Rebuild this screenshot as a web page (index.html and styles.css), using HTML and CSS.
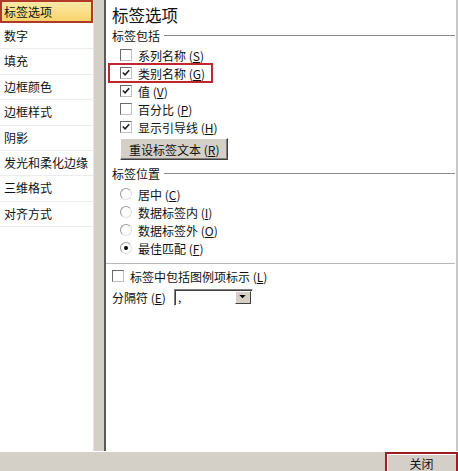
FILE: index.html
```html
<!DOCTYPE html>
<html>
<head>
<meta charset="utf-8">
<link rel="stylesheet" href="styles.css">
</head>
<body>
<div class="dialog">
  <div class="main">
    <ul class="nav">
      <li class="nav-item selected">标签选项</li>
      <li class="nav-item">数字</li>
      <li class="nav-item">填充</li>
      <li class="nav-item">边框颜色</li>
      <li class="nav-item">边框样式</li>
      <li class="nav-item">阴影</li>
      <li class="nav-item">发光和柔化边缘</li>
      <li class="nav-item">三维格式</li>
      <li class="nav-item">对齐方式</li>
    </ul>
    <div class="gutter"></div>
    <div class="content">
      <div class="title">标签选项</div>
      <div class="group-head"><span>标签包括</span><span class="rule"></span></div>
      <div class="opts">
        <div class="row"><span class="cb"></span><span>系列名称 (<u>S</u>)</span></div>
        <div class="row hl"><span class="cb on"><svg viewBox="0 0 11 11"><path d="M2 5 L4.5 7.5 L9 2.5" fill="none" stroke="#222" stroke-width="1.8"/></svg></span><span>类别名称 (<u>G</u>)</span></div>
        <div class="row"><span class="cb on"><svg viewBox="0 0 11 11"><path d="M2 5 L4.5 7.5 L9 2.5" fill="none" stroke="#222" stroke-width="1.8"/></svg></span><span>值 (<u>V</u>)</span></div>
        <div class="row"><span class="cb"></span><span>百分比 (<u>P</u>)</span></div>
        <div class="row"><span class="cb on"><svg viewBox="0 0 11 11"><path d="M2 5 L4.5 7.5 L9 2.5" fill="none" stroke="#222" stroke-width="1.8"/></svg></span><span>显示引导线 (<u>H</u>)</span></div>
        <div class="btn-row"><span class="btn">重设标签文本 (<u>R</u>)</span></div>
      </div>
      <div class="group-head pos"><span>标签位置</span><span class="rule"></span></div>
      <div class="opts radios">
        <div class="row"><span class="rb"></span><span>居中 (<u>C</u>)</span></div>
        <div class="row"><span class="rb"></span><span>数据标签内 (<u>I</u>)</span></div>
        <div class="row"><span class="rb"></span><span>数据标签外 (<u>O</u>)</span></div>
        <div class="row"><span class="rb on"></span><span>最佳匹配 (<u>F</u>)</span></div>
      </div>
      <div class="sep"></div>
      <div class="row legend"><span class="cb"></span><span>标签中包括图例项标示 (<u>L</u>)</span></div>
      <div class="sep-row">
        <span>分隔符 (<u>E</u>)</span>
        <span class="select"><span class="val">,</span><span class="arrow"><svg viewBox="0 0 8 5"><path d="M0 0 H8 L4 4 Z" fill="#000"/></svg></span></span>
      </div>
    </div>
  </div>
  <div class="footer">
    <span class="close">关闭</span>
  </div>
</div>
</body>
</html>
```

FILE: styles.css
```css
* { box-sizing: border-box; }
html, body { margin: 0; padding: 0; }
body {
  width: 458px;
  height: 471px;
  overflow: hidden;
  font-family: "Noto Sans CJK SC", "DejaVu Sans", sans-serif;
  font-size: 12px;
  color: #111;
  background: #d4d0c8;
}
.dialog {
  display: flex;
  flex-direction: column;
  height: 471px;
}
.main {
  display: flex;
  height: 452px;
  border-bottom: 1px solid #fff;
}
.nav {
  list-style: none;
  margin: 0;
  padding: 0;
  width: 94px;
  background: #fff;
  border-right: 1px solid #e6e6e6;
}
.nav-item {
  height: 25.4px;
  line-height: 24px;
  padding-left: 4px;
  border-bottom: 1px solid #ececec;
  white-space: nowrap;
}
.nav-item.selected {
  height: 23px;
  line-height: 19px;
  background: linear-gradient(#fde9a8, #f8d46a);
  border: 2px solid #b0392a;
  padding-left: 2px;
  margin-bottom: 1px;
}
.gutter {
  width: 12px;
  background: #d4d0c8;
  border-right: 2px solid #5a5a5a;
}
.content {
  flex: 1;
  background: #fff;
  border-right: 2px solid #c8c8c8;
  padding-left: 6px;
  padding-right: 1px;
}
.title {
  font-size: 16.5px;
  height: 26px;
  line-height: 30px;
}
.group-head {
  display: flex;
  align-items: center;
  height: 19px;
  gap: 4px;
}
.group-head .rule {
  flex: 1;
  height: 1px;
  background: #8a8a8a;
}
.group-head.pos { margin-top: 3px; }
.opts { padding-left: 8px; margin-top: 1px; }
.row {
  display: flex;
  align-items: center;
  height: 18px;
  gap: 6px;
}
.cb {
  width: 12px;
  height: 12px;
  border: 1px solid #6b6b6b;
  border-right-color: #c0c0c0;
  border-bottom-color: #c0c0c0;
  background: #fff;
  display: flex;
}
.cb svg { width: 10px; height: 10px; }
.row.hl {
  margin-left: -11px;
  padding-left: 11px;
  width: 103px;
  outline: 2px solid #c0262d;
  outline-offset: -1px;
}
.btn-row { padding: 2px 0 0 0; height: 25px; }
.btn {
  display: inline-flex;
  align-items: center;
  height: 22px;
  padding: 0 8px;
  background: #d4d0c8;
  border: 1px solid #fff;
  border-right-color: #404040;
  border-bottom-color: #404040;
  box-shadow: inset -1px -1px 0 #808080;
}
.opts.radios { margin-top: 2px; }
.rb {
  width: 12px;
  height: 12px;
  border-radius: 50%;
  border: 1px solid #9a9a9a;
  border-right-color: #e0e0e0;
  border-bottom-color: #e0e0e0;
  background: #fff;
  display: flex;
  align-items: center;
  justify-content: center;
}
.rb.on::after {
  content: "";
  width: 4px;
  height: 4px;
  border-radius: 50%;
  background: #000;
}
.sep {
  height: 1px;
  background: #b8b8b8;
  margin: 6px 0 3px -6px;
}
.legend { padding-left: 0; }
.sep-row {
  display: flex;
  align-items: center;
  height: 24px;
  gap: 8px;
}
.select {
  display: flex;
  width: 79px;
  height: 17px;
  border: 1px solid #808080;
  border-right-color: #fff;
  border-bottom-color: #fff;
  box-shadow: inset 1px 1px 0 #404040;
  background: #fff;
}
.select .val { flex: 1; padding-left: 3px; line-height: 13px; }
.select .arrow {
  width: 16px;
  margin: 1px;
  background: #d4d0c8;
  border: 1px solid #fff;
  border-right-color: #404040;
  border-bottom-color: #404040;
  display: flex;
  align-items: center;
  justify-content: center;
}
.select .arrow svg { width: 7px; height: 4px; }
.footer {
  flex: 1;
  display: flex;
  justify-content: flex-end;
  align-items: flex-end;
}
.close {
  width: 73px;
  height: 19px;
  border: 2px solid #9a1e22;
  border-bottom: none;
  background: #d4d0c8;
  box-shadow: inset 1px 1px 0 #fff;
  text-align: center;
  line-height: 19px;
  overflow: hidden;
}
```
